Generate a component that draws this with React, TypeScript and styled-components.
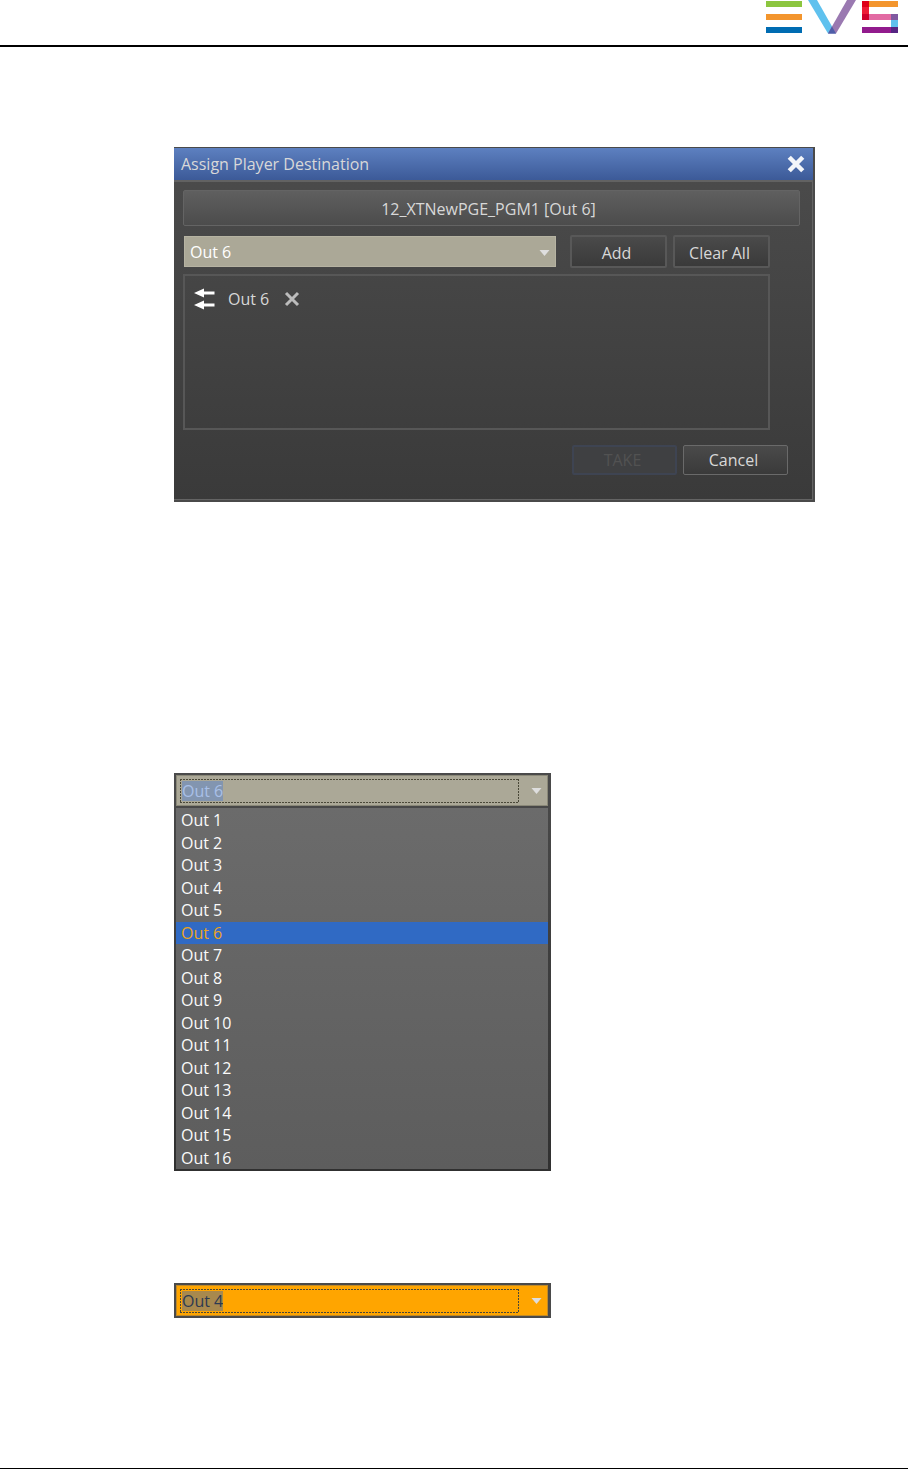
import React from 'react';
import styled, { createGlobalStyle } from 'styled-components';

const GlobalStyle = createGlobalStyle`
  *, *::before, *::after { box-sizing: border-box; }
  body {
    margin: 0;
    background: #fff;
    font-family: 'Open Sans', 'Noto Sans', 'Liberation Sans', sans-serif;
    font-size: 16px;
    line-height: 22px;
  }
  button, input, select { font: inherit; margin: 0; }
`;

const Page = styled.div`
  display: flex;
  flex-direction: column;
  min-height: 100vh;
`;

const Header = styled.header`
  display: flex;
  justify-content: flex-end;
  height: 47px;
  padding: 0 10px;
  border-bottom: 2px solid #000;
`;

const Main = styled.main`
  flex: 1;
  padding: 100px 93px 0 174px;
`;

const Footer = styled.footer`
  border-top: 1px solid #000;
`;

const Dialog = styled.section`
  width: 100%;
  max-width: 641px;
  margin-bottom: 271px;
  border: solid #4a4a4a;
  border-width: 1px 2px 2px 0;
  box-shadow: inset -1px -1px #646464;
  background: linear-gradient(#4c4c4c, #3a3a3a);
  color: #d8d8d8;
`;

const TitleBar = styled.header`
  display: flex;
  align-items: center;
  justify-content: space-between;
  height: 34px;
  padding: 0 8px 0 7px;
  border-bottom: 2px solid #626262;
  background: linear-gradient(#5d80c0, #3c5a98);
`;

const Title = styled.h1`
  margin: 0;
  font-size: 16px;
  font-weight: 400;
  line-height: 22px;
`;

const IconButton = styled.button`
  display: flex;
  padding: 0;
  border: 0;
  background: none;
  color: inherit;
`;

const DialogBody = styled.div`
  padding: 8px 13px 25px 9px;
`;

const Destination = styled.div`
  display: flex;
  align-items: center;
  justify-content: center;
  height: 36px;
  padding: 2px 6px 0 0;
  border: 1px solid #646464;
  border-radius: 2px;
  background: linear-gradient(#5f5f5f, #4c4c4c);
`;

const Picker = styled.div`
  display: flex;
  align-items: center;
  gap: 6px;
  margin: 9px 30px 6px 1px;
`;

const SelectBox = styled.div`
  position: relative;
  flex: 1;
  margin-right: 8px;
`;

const Select = styled.select`
  appearance: none;
  display: block;
  width: 100%;
  height: 31px;
  padding: 0 24px 0 5px;
  border: 1px solid #b6b3a2;
  border-radius: 0;
  background: #aba897;
  color: #fff;
`;

const SelectArrow = styled.span`
  position: absolute;
  top: 14px;
  right: 6px;
  display: flex;
  pointer-events: none;
`;

const Button = styled.button<{ $wide?: boolean }>`
  width: ${(p) => (p.$wide ? 105 : 97)}px;
  height: ${(p) => (p.$wide ? 30 : 33)}px;
  padding: ${(p) => (p.$wide ? 0 : 2)}px 4px 0 0;
  border: ${(p) => (p.$wide ? 1 : 2)}px solid ${(p) => (p.$wide ? '#6a6a6a' : '#585858')};
  border-radius: 2px;
  background: linear-gradient(#4a4a4a, #3a3a3a);
  color: #d8d8d8;

  &:disabled {
    border: 2px solid #3e4452;
    background: #3f4042;
    color: #525252;
  }
`;

const Assigned = styled.ul`
  height: 156px;
  margin: 0 30px 15px 0;
  padding: 12px 9px;
  border: 2px solid #575757;
  list-style: none;
`;

const AssignedItem = styled.li`
  display: flex;
  align-items: center;
  gap: 13px;
`;

const RemoveButton = styled(IconButton)`
  padding: 0 2px;
`;

const Actions = styled.div`
  display: flex;
  justify-content: flex-end;
  gap: 6px;
  padding-right: 12px;
`;

const Combo = styled.div`
  width: 100%;
  max-width: 377px;
  padding: 2px 3px 2px 2px;
  background: linear-gradient(#4a4a4a, #303030);

  & + & {
    margin: 112px 0 150px;
    background: #4a4a4a;
  }
`;

const ComboField = styled.div<{ $alert?: boolean }>`
  display: flex;
  align-items: center;
  justify-content: space-between;
  height: 31px;
  padding: 0 5px 0 3px;
  border: 1px solid ${(p) => (p.$alert ? '#c08a28' : '#8a8878')};
  background: ${(p) => (p.$alert ? '#ffa500' : '#aba897')};
`;

const FocusRing = styled.div`
  flex: 1;
  display: flex;
  align-items: center;
  height: 24px;
  margin-right: 12px;
  padding-left: 2px;
  background:
    repeating-linear-gradient(90deg, #4a4838 0 2px, transparent 2px 3px) top / 100% 1px no-repeat,
    repeating-linear-gradient(90deg, #4a4838 0 2px, transparent 2px 3px) bottom / 100% 1px no-repeat,
    repeating-linear-gradient(#4a4838 0 2px, transparent 2px 3px) left / 1px 100% no-repeat,
    repeating-linear-gradient(#4a4838 0 2px, transparent 2px 3px) right / 1px 100% no-repeat;
`;

const ComboInput = styled.input<{ $alert?: boolean }>`
  field-sizing: content;
  height: 20px;
  padding: 0;
  border: 0;
  outline: 0;
  background: ${(p) => (p.$alert ? '#a8894e' : '#8295b0')};
  color: ${(p) => (p.$alert ? '#2c3a52' : '#a9c0e8')};
`;

const Options = styled.ul`
  display: grid;
  grid-template-rows: repeat(16, 1fr);
  height: 363px;
  margin: 0;
  padding: 1px 0 0;
  border-top: 2px solid #484848;
  background: linear-gradient(#6b6b6b, #5d5d5d);
  list-style: none;
`;

const Option = styled.li`
  padding-left: 5px;
  color: #fafafa;

  &[aria-selected='true'] {
    background: #306ac4;
    color: #eba420;
  }
`;

const Arrow = () => (
  <svg width="11" height="6" viewBox="0 0 11 6" aria-hidden="true">
    <path d="M0.5 0H10.5L5.5 6Z" fill="#dedede" />
  </svg>
);

const Cross = ({ size, color, weight }: { size: number; color: string; weight: number }) => (
  <svg width={size} height={size} viewBox="0 0 16 16" aria-hidden="true">
    <path d="M2 2L14 14M14 2L2 14" stroke={color} strokeWidth={weight} />
  </svg>
);

const OutputArrows = () => (
  <svg width="21" height="22" viewBox="0 0 21 22" aria-hidden="true">
    <path
      d="M0 5L10 0.5V3.5H20.5V6.5H10V9.5ZM0 17L10 12.5V15.5H20.5V18.5H10V21.5Z"
      fill="#fff"
    />
  </svg>
);

const Logo = () => (
  <svg width="132" height="34" viewBox="0 0 132 34" role="img" aria-label="EVS">
    <path d="M0 1H36V7H0Z" fill="#8cc63f" />
    <path d="M0 14H36V20H0Z" fill="#f3952d" />
    <path d="M0 27H36V33H0Z" fill="#006cb2" />
    <path d="M42 0H51L70 33.5H62Z" fill="#5fc1ee" />
    <path d="M81 0H90L70 33.5H62Z" fill="#9a79b1" />
    <path d="M66 26.5L70 33.5H62Z" fill="#4e5da8" />
    <path d="M96 1H103V7H96Z" fill="#df0019" />
    <path d="M103 1H132V7H103Z" fill="#f3952d" />
    <path d="M96 7H103V14H96Z" fill="#ee1c37" />
    <path d="M96 14H103V20H96Z" fill="#d0002b" />
    <path d="M103 14H125V20H103Z" fill="#e26aa3" />
    <path d="M125 14H132V20H125Z" fill="#8059a0" />
    <path d="M125 20H132V27H125Z" fill="#5fc1ee" />
    <path d="M96 27H125V33H96Z" fill="#921b8d" />
    <path d="M125 27H132V33H125Z" fill="#552482" />
  </svg>
);

const outputs = Array.from({ length: 16 }, (_, i) => `Out ${i + 1}`);

function ComboHead({ value, label, alert }: { value: string; label: string; alert?: boolean }) {
  return (
    <ComboField $alert={alert}>
      <FocusRing>
        <ComboInput type="text" aria-label={label} defaultValue={value} $alert={alert} />
      </FocusRing>
      <IconButton type="button" aria-label="Show outputs">
        <Arrow />
      </IconButton>
    </ComboField>
  );
}

export default function App() {
  return (
    <Page>
      <GlobalStyle />
      <Header>
        <Logo />
      </Header>
      <Main>
        <Dialog role="dialog" aria-labelledby="dialog-title">
          <TitleBar>
            <Title id="dialog-title">Assign Player Destination</Title>
            <IconButton type="button" aria-label="Close">
              <Cross size={18} color="#f4f6fa" weight={4} />
            </IconButton>
          </TitleBar>
          <DialogBody>
            <Destination>12_XTNewPGE_PGM1 [Out 6]</Destination>
            <Picker>
              <SelectBox>
                <Select aria-label="Output" defaultValue="Out 6">
                  {outputs.map((name) => (
                    <option key={name}>{name}</option>
                  ))}
                </Select>
                <SelectArrow>
                  <Arrow />
                </SelectArrow>
              </SelectBox>
              <Button type="button">Add</Button>
              <Button type="button">Clear All</Button>
            </Picker>
            <Assigned>
              <AssignedItem>
                <OutputArrows />
                <span>Out 6</span>
                <RemoveButton type="button" aria-label="Remove Out 6">
                  <Cross size={16} color="#bcbcbc" weight={3} />
                </RemoveButton>
              </AssignedItem>
            </Assigned>
            <Actions>
              <Button type="button" $wide disabled>
                TAKE
              </Button>
              <Button type="button" $wide>
                Cancel
              </Button>
            </Actions>
          </DialogBody>
        </Dialog>

        <Combo>
          <ComboHead value="Out 6" label="Selected output" />
          <Options role="listbox" aria-label="Outputs">
            {outputs.map((name) => (
              <Option key={name} role="option" aria-selected={name === 'Out 6'}>
                {name}
              </Option>
            ))}
          </Options>
        </Combo>

        <Combo>
          <ComboHead value="Out 4" label="Pending output" alert />
        </Combo>
      </Main>
      <Footer />
    </Page>
  );
}
